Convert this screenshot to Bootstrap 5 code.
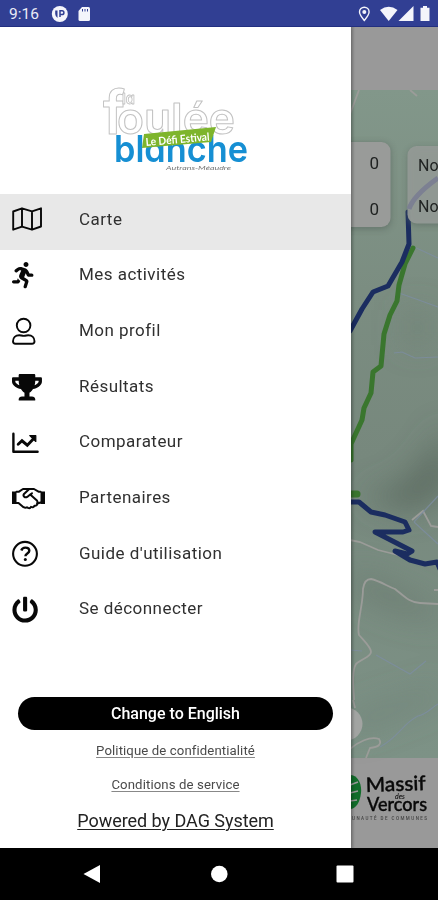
<!DOCTYPE html>
<html lang="fr">
<head>
<meta charset="utf-8">
<meta name="viewport" content="width=device-width, initial-scale=1">
<title>La Foulée Blanche</title>
<link href="https://cdn.jsdelivr.net/npm/bootstrap@5.3.0/dist/css/bootstrap.min.css" rel="stylesheet">
<style>
  body { font-family: Roboto, "Liberation Sans", sans-serif; background: #000; }
  .phone { width: 438px; height: 900px; }
  .status-bar { height: 27px; background: #313f93; color: #e9ebf6; font-size: 15.5px; padding-left: 9px; border-bottom: 1px solid #222f80; }
  .clock { padding-top: 3px; }
  .screen { height: 821px; }
  .map-layer { inset: 0; }
  .drawer { width: 350.5px; z-index: 2; box-shadow: 0 0 4px rgba(0,0,0,.3); }
  .drawer-logo { height: 167px; padding: 57px 0 0 98px; }
  .brand-blue { font-family: Inter, Lato, sans-serif; font-feature-settings: "cv11" 1; font-weight: 600; }
  .menu-item { height: 55.7px; padding: 0 0 5px 12px; font-size: 17px; letter-spacing: .46px; color: #303030; }
  .menu-item.current { background: #e8e8e8; }
  .menu-item svg { width: 34px; height: 30px; margin-right: 33px; flex: none; color: #080808; }
  .drawer-foot { padding: 0 17.5px 15px 18px; }
  .lang-btn { height: 33px; font-size: 16px; font-weight: 500; background: #000; color: #fff; margin-bottom: 11px; }
  .foot-link { font-size: 13.2px; color: #4a4a4a; letter-spacing: .1px; line-height: 20px; margin-bottom: 14px; text-underline-offset: 2px; text-decoration-color: #888; }
  .powered { font-size: 18px; color: #222; letter-spacing: -.04px; line-height: 24px; text-underline-offset: 2px; text-decoration-thickness: 1px; }
  .nav-keys { height: 52px; }
</style>
<script src="https://cdn.jsdelivr.net/npm/bootstrap@5.3.0/dist/js/bootstrap.bundle.min.js"></script>
</head>
<body class="m-0 overflow-hidden">
<div class="phone d-flex flex-column overflow-hidden">
  <header class="status-bar d-flex align-items-center flex-shrink-0">
    <span class="clock">9:16</span>
    <svg class="ms-auto me-0" width="388" height="26" viewBox="50 0 388 26" fill="#f4f5fb">
      <circle cx="59.800" cy="14" r="8"/>
      <path d="M55.200 10.500h2.300v7.500a5 5 0 0 1-2.300-4z" fill="#313f93"/><path d="M60 17v-6.200h2a1.900 1.900 0 0 1 0 3.800h-2" fill="none" stroke="#313f93" stroke-width="1.500"/>
      <path d="M82 7h6.500q1.500 0 1.500 1.500v11q0 1.500-1.500 1.500h-8.500q-1.500 0-1.500-1.500V11z"/>
      <path d="M82.500 9v2.500M85 9v2.500M87.500 9v2.500" stroke="#313f93" stroke-width="1"/>
      <path d="M364.300 20.500c-3-3.700-4.800-6-4.800-8.500a4.800 4.800 0 0 1 9.600 0c0 2.500-1.800 4.800-4.800 8.500z" fill="none" stroke="#f4f5fb" stroke-width="1.400"/>
      <circle cx="364.300" cy="12" r="2"/>
      <path d="M380 10q8.700-6.500 17.500 0L388.700 21z"/>
      <path d="M413.500 6v15H398.500z"/>
      <path d="M423 6h4v1.700h2.500V21h-9V7.700h2.500z"/>
    </svg>
  </header>

  <main class="screen position-relative d-flex flex-shrink-0 overflow-hidden">
    <svg class="map-layer position-absolute" width="438" height="821" viewBox="0 27 438 821" font-family="Roboto, sans-serif">
      <defs>
        <filter id="soft" x="-60%" y="-60%" width="220%" height="220%"><feGaussianBlur stdDeviation="15"/></filter>
        <filter id="cardshade" x="-20%" y="-20%" width="140%" height="140%"><feGaussianBlur stdDeviation="3"/></filter>
        <linearGradient id="land" x1="0" y1="0" x2="0" y2="1">
          <stop offset="0" stop-color="#82978a"/><stop offset=".3" stop-color="#7b8d81"/>
          <stop offset=".55" stop-color="#77887d"/><stop offset="1" stop-color="#7d9286"/>
        </linearGradient>
        <linearGradient id="edge"><stop offset="0" stop-opacity=".2"/><stop offset="1" stop-opacity="0"/></linearGradient>
      </defs>
      <rect x="340" y="27" width="98" height="821" fill="#999"/>
      <rect x="340" y="90" width="98" height="668" fill="url(#land)"/>
      <g filter="url(#soft)">
        <path d="M448 425L425 460 400 485 360 497 410 512 448 490z" fill="#56655c" opacity=".75"/>
        <path d="M350 572L390 585 440 610V622L395 612 350 590z" fill="#65756b" opacity=".6"/>
        <path d="M405 310h25v35h-25z" fill="#6b7b71" opacity=".5"/>
        <path d="M350 715L440 685V700L350 735z" fill="#697a70" opacity=".5"/>
      </g>
      <g fill="none" stroke="#9b9c99" stroke-width="1.800">
        <path d="M350 114L359 90M410 90l7 6"/>
        <path d="M350 540l10 2 18 8 20 5 14 6"/>
        <path d="M354 700c-1-16-2-30 2-36 5-5 15-7 15-12s-7-11-12-17c-3-11 4-28 4-46 1-7 4-10 8-10 9 2 16 7 24 10 9 7 15 14 25 14l18 1"/>
        <path d="M412 520l11-9 8 15 7 1M434 590h4"/>
        <path d="M350 749c8-7 20-13 29-10 3 5 0 8-9 9l-4 10M353 700l2 8"/>
      </g>
      <g fill="none" stroke="#7e8da3" stroke-width="1.200">
        <path d="M396 292l20 7 22 8M394 353l8-1 13 6 23-1M414 522l24-26M414 522l24 22M350 650l12 1M376 655l34 19 16-13M380 747c20-11 22-23 38-31 9-2 13-8 20-12M412 246l26 12" opacity=".75"/>
      </g>
      <g fill="none" stroke-linecap="round" stroke-linejoin="round" stroke-width="5">
        <path d="M413 248L405 264 399 285 397 301 390 315 384 334 381 366 373 372 371 393 364 408 362 420 351 444V460" stroke="#3a762e"/>
        <path d="M408 212L409 244 402 262 388 286 373 292 362 309 350 331" stroke="#1b2d60"/>
        <path d="M350 502h9l12 10 14 3 20 7 4 8-6 2-28 0 37 19-5 3-12-3 15 9 15 4 12-2 3 7" stroke="#1b2d60"/>
        <path d="M351 494h6" stroke="#3a762e" stroke-width="7"/>
      </g>
      <g fill="#59665e" opacity=".65" filter="url(#cardshade)">
        <rect x="330" y="143" width="61" height="86" rx="9"/><rect x="408" y="148" width="50" height="77" rx="9"/>
      </g>
      <rect x="330" y="142" width="60.500" height="85" rx="9" fill="#999b99"/>
      <rect x="407.500" y="146" width="50" height="77.500" rx="9" fill="#949a96" opacity=".94"/>
      <path d="M409 209C412 200 424 188 438 178" fill="none" stroke="#7c8092" stroke-width="5"/>
      <g font-size="17" fill="#202322">
        <text x="369.500" y="168.500">0</text><text x="369.500" y="215">0</text>
        <text x="418" y="170.500" font-size="16">No</text><text x="418" y="212" font-size="16">No</text>
      </g>
      <circle cx="346" cy="724" r="16.500" fill="#a2a4a2"/>
      <path d="M350 775c8 0 12 9 11 18s-5 16-11 16z" fill="#126d2b"/>
      <path d="M350 785l8-3M350 793l8-2M350 801l7-1" stroke="#999" stroke-width="1.500"/>
      <g fill="#090909" stroke="#090909" stroke-width=".4" font-family="Lato, sans-serif" font-weight="500">
        <text x="366" y="792" font-size="20" textLength="60" lengthAdjust="spacingAndGlyphs" transform="rotate(-2 366 792)">Massif</text>
        <text x="367" y="811" font-size="19" textLength="60" lengthAdjust="spacingAndGlyphs">Vercors</text>
        <text x="395" y="799" font-size="7" stroke="none" font-style="italic">des</text>
      </g>
      <text x="352" y="820" font-size="4.500" font-weight="500" fill="#444" textLength="75">UNAUTÉ DE COMMUNES</text>
      <rect x="350" y="27" width="5" height="821" fill="url(#edge)"/>
    </svg>

    <aside class="drawer position-relative bg-white d-flex flex-column">
      <div class="drawer-logo">
        <svg class="d-block overflow-visible" width="156" height="92" viewBox="98 84 156 92" font-family="Lato, sans-serif">
          <g fill="#fff" stroke="#c2c2c2" stroke-width="1" stroke-linejoin="round">
            <text x="117" y="134" font-size="43" font-family="Inter, sans-serif" font-weight="600" textLength="118" lengthAdjust="spacingAndGlyphs">oulée</text>
            <text x="103" y="134" font-size="60" font-family="Inter, sans-serif" font-weight="600" textLength="22" lengthAdjust="spacingAndGlyphs">f</text>
            <text class="brand-blue" x="122" y="104" font-size="15" stroke-width=".8" textLength="13" lengthAdjust="spacingAndGlyphs">la</text>
          </g>
          <text class="brand-blue" x="114" y="162" font-size="37" fill="#168fd3" textLength="134" lengthAdjust="spacingAndGlyphs">blanche</text>
          <path d="M144 134L216 127 211 142 142 148z" fill="#7eb52c"/>
          <text x="146" y="146" font-size="11" font-weight="700" fill="#fff" textLength="64" lengthAdjust="spacingAndGlyphs" transform="rotate(-5 146 146)">Le Défi Estival</text>
          <text x="166" y="169.500" font-size="6" font-style="italic" fill="#777" textLength="65" lengthAdjust="spacingAndGlyphs">Autrans-Méaudre</text>
        </svg>
      </div>

      <nav class="d-flex flex-column">
        <div class="menu-item current d-flex align-items-center">
          <svg viewBox="0 0 34 30" fill="none" stroke="currentColor" stroke-width="1.900" stroke-linejoin="round"><path d="M1.200 7.500L10 4.300l10 3L29 4.300v18.200L20 25.700 10 22.700 1.200 25.700zM10 4.300v18.400M20 7.300v18.400"/></svg>
          <span>Carte</span>
        </div>
        <div class="menu-item d-flex align-items-center">
          <svg viewBox="0 0 34 30" fill="currentColor"><path transform="translate(0 2) scale(.0515)" d="M272 96c26.510 0 48-21.490 48-48S298.510 0 272 0s-48 21.490-48 48 21.490 48 48 48zM113.690 317.470l-14.800 34.520H32c-17.670 0-32 14.330-32 32s14.330 32 32 32h77.450c19.250 0 36.580-11.440 44.110-29.090l8.790-20.520-10.670-6.300c-17.320-10.230-30.060-25.370-37.990-42.610zM384 223.990h-44.030l-26.060-53.250c-12.500-25.550-35.450-44.230-61.780-50.940l-71.080-21.140c-28.300-6.800-57.770-.55-80.840 17.140l-39.670 30.410c-14.030 10.750-16.690 30.830-5.940 44.860s30.840 16.690 44.860 5.940l39.660-30.410c7.670-5.890 17.440-8 25.270-6.140l14.700 4.370-37.460 87.390c-12.620 29.480-1.310 64.010 26.300 80.310l84.980 50.170-27.470 87.730c-5.280 16.860 4.110 34.820 20.970 40.100 3.190 1 6.410 1.480 9.580 1.480 13.610 0 26.230-8.770 30.520-22.450l31.640-101.060c5.910-20.770-2.890-43.080-21.640-54.390l-61.240-36.140 31.310-78.280 20.270 41.430c8 16.340 24.920 26.890 43.110 26.890H384c17.670 0 32-14.330 32-32s-14.330-31.990-32-31.990z"/></svg>
          <span>Mes activités</span>
        </div>
        <div class="menu-item d-flex align-items-center">
          <svg viewBox="0 0 34 30" fill="none" stroke="currentColor" stroke-width="1.900"><circle cx="11.600" cy="9.500" r="6.800"/><path d="M7.200 19.200c-3.700 0-6.200 2.500-6.200 6 0 1.500.8 2.500 2.500 2.500h16.500c1.700 0 2.500-1 2.500-2.500 0-3.500-2.500-6-6.200-6-1.500 0-2.500.7-4.500.7s-3-.7-4.600-.7z"/></svg>
          <span>Mon profil</span>
        </div>
        <div class="menu-item d-flex align-items-center">
          <svg viewBox="0 0 34 30" fill="currentColor"><path transform="translate(0 3) scale(.052)" d="M552 64H448V24c0-13.300-10.700-24-24-24H152c-13.300 0-24 10.700-24 24v40H24C10.700 64 0 74.700 0 88v56c0 35.700 22.500 72.400 61.900 100.700 31.500 22.700 69.800 37.100 110 41.700C203.300 338.500 240 360 240 360v72h-48c-35.300 0-64 20.700-64 56v12c0 6.600 5.400 12 12 12h296c6.600 0 12-5.400 12-12v-12c0-35.300-28.700-56-64-56h-48v-72s36.700-21.500 68.100-73.600c40.300-4.600 78.600-19 110-41.700 39.300-28.300 61.900-65 61.900-100.700V88c0-13.300-10.700-24-24-24zM99.300 192.800C74.900 175.200 64 155.600 64 144v-16h64.200c1 32.600 5.800 61.200 12.800 86.200-15.100-5.200-29.200-12.400-41.700-21.400zM512 144c0 16.100-17.700 36.100-35.300 48.800-12.500 9-26.700 16.200-41.800 21.400 7-25 11.800-53.600 12.800-86.200H512v16z"/></svg>
          <span>Résultats</span>
        </div>
        <div class="menu-item d-flex align-items-center">
          <svg viewBox="0 0 34 30" fill="none" stroke="currentColor" stroke-width="2.400" stroke-linecap="round" stroke-linejoin="round"><path d="M1.400 6.700v18h24.200"/><path d="M6.200 17.300l3.800-3.500 5.300 4.400 6-6.200" stroke-width="2.900" stroke-linejoin="miter"/><path d="M17.800 8.500h6v6z" fill="currentColor" stroke-width="1.200"/></svg>
          <span>Comparateur</span>
        </div>
        <div class="menu-item d-flex align-items-center">
          <svg viewBox="0 0 34 30" fill="none" stroke="currentColor" stroke-width="2" stroke-linejoin="round" stroke-linecap="round"><path d="M0 8.500h4.500V21H0zM28.500 8.500H33V21h-4.500z" fill="currentColor" stroke="none"/><path d="M4.500 8.700H7L11 6h11l4.500 2.700h2M4.500 20H6.500l5 4.200c1.500.8 2.500.8 3.500 0l1 .7c1.500.7 2.500 0 3-1 1.800.8 3 .2 3.500-1.200 1.700.3 2.800-.7 2.900-2.200L28.500 19.500"/><path d="M17 6.200l-5 4.700c-1.500 2.200 1 4.300 3.200 3l3-2.500 6.700 6c.8 1 .9 2 .3 3M20 10.200l-2 1.700"/></svg>
          <span>Partenaires</span>
        </div>
        <div class="menu-item d-flex align-items-center">
          <svg viewBox="0 0 34 30" fill="none" stroke="currentColor"><circle cx="13" cy="15.800" r="11.900" stroke-width="2.100"/><path d="M9.300 12.500c.7-2 2-2.900 4-2.900 2.300 0 4 1.300 4 3.200 0 2.700-3.900 2.800-3.900 5.400" stroke-width="2.400"/><circle cx="13.300" cy="21.400" r="1.500" fill="currentColor" stroke="none"/></svg>
          <span>Guide d'utilisation</span>
        </div>
        <div class="menu-item d-flex align-items-center">
          <svg viewBox="0 0 34 30" fill="currentColor"><path transform="translate(0 2.800) scale(.0512)" d="M400 54.100c63 45 104 118.600 104 201.900 0 136.800-110.800 247.700-247.500 248C120 504.300 8.200 393 8 256.400 7.900 173.100 48.900 99.300 111.800 54.200c11.700-8.300 28-4.800 35 7.700L162.600 90c5.900 10.500 3.100 23.800-6.600 31-41.500 30.800-68 79.600-68 134.900-.1 92.300 74.500 168.100 168 168.100 91.600 0 168.600-74.200 168-169.100-.3-51.800-24.700-101.800-68.100-134-9.700-7.200-12.400-20.500-6.500-30.900l15.800-28.100c7-12.400 23.200-16.100 34.800-7.800zM296 264V24c0-13.300-10.700-24-24-24h-32c-13.300 0-24 10.700-24 24v240c0 13.300 10.700 24 24 24h32c13.300 0 24-10.700 24-24z"/></svg>
          <span>Se déconnecter</span>
        </div>
      </nav>

      <div class="drawer-foot mt-auto d-flex flex-column align-items-center">
        <button type="button" class="lang-btn btn rounded-pill border-0 w-100 p-0">Change to English</button>
        <a href="#" class="foot-link">Politique de confidentialité</a>
        <a href="#" class="foot-link">Conditions de service</a>
        <a href="#" class="powered">Powered by DAG System</a>
      </div>
    </aside>
  </main>

  <footer class="nav-keys bg-black flex-shrink-0">
    <svg class="d-block" width="438" height="52" viewBox="0 848 438 52" fill="#fff">
      <path d="M83.500 874L100 865v18z"/><circle cx="219.300" cy="874" r="8.300"/><rect x="336.500" y="865.500" width="17" height="17" rx="1"/>
    </svg>
  </footer>
</div>
</body>
</html>
